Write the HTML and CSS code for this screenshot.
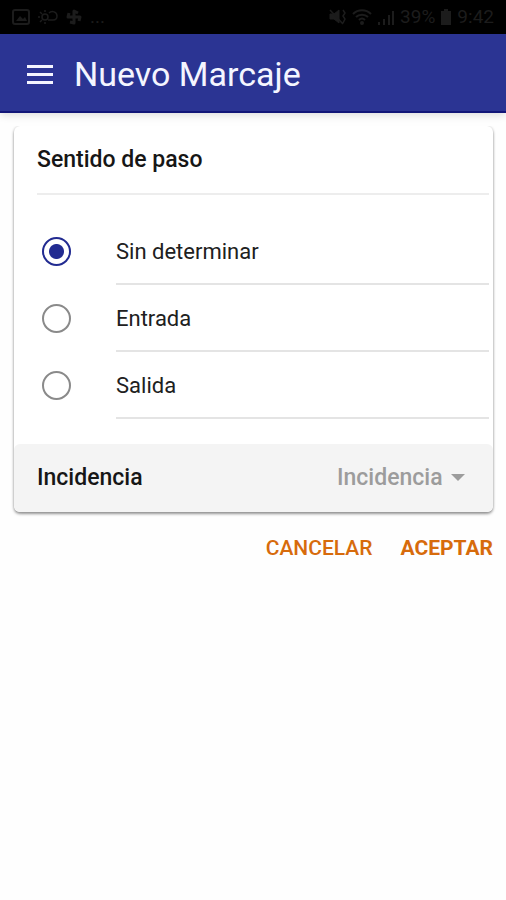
FILE: index.html
```html
<!DOCTYPE html>
<html lang="es">
<head>
<meta charset="utf-8">
<meta name="viewport" content="width=device-width, initial-scale=1">
<title>Nuevo Marcaje</title>
<link rel="stylesheet" href="styles.css">
</head>
<body>
<div class="status">
  <div class="status-group">
    <svg width="18" height="18" viewBox="0 0 18 18" fill="none" stroke="currentColor" stroke-width="2"><rect x="1" y="2" width="16" height="14" rx="2"/><path d="M4 13l4-5 3 3 2-2 2 4z" fill="currentColor" stroke="none"/></svg>
    <svg width="20" height="18" viewBox="0 0 20 18" fill="none" stroke="currentColor" stroke-width="1.5"><circle cx="7" cy="9" r="3"/><path d="M7 2v2M7 14v2M0 9h2M2 4l2 2M2 14l2-2M11 5c3-3 8-1 8 3 0 3-2 4-4 4h-5"/></svg>
    <svg width="16" height="18" viewBox="0 0 16 18" fill="none" stroke="currentColor" stroke-width="3" stroke-linejoin="round"><path d="M8 9V3l4 2M8 9h6l-1 4M8 9v6l-4-1M8 9H2l1-4"/></svg>
    <span class="more">...</span>
  </div>
  <div class="status-group status-right">
    <svg width="18" height="18" viewBox="0 0 18 18" fill="currentColor" stroke="currentColor"><path d="M1 6h4l5-4v13l-5-4H1z"/><path d="M1 2l13 14M14 2l2 3-2 3 2 3-2 4" fill="none" stroke-width="1.5"/></svg>
    <svg width="20" height="18" viewBox="0 0 20 18" fill="none" stroke="currentColor" stroke-width="2"><path d="M1 6c5-5 13-5 18 0M4 9c3-3 9-3 12 0M7 12c2-2 4-2 6 0"/><circle cx="10" cy="15" r="1"/></svg>
    <svg width="18" height="18" viewBox="0 0 18 18" fill="none" stroke="currentColor" stroke-width="2"><path d="M2 17v-3M7 17v-6M12 17V7M16 17V3"/></svg>
    <span>39%</span>
    <svg width="12" height="18" viewBox="0 0 12 18" fill="currentColor"><path d="M4 1h4v2h3v14H1V3h3z"/></svg>
    <span>9:42</span>
  </div>
</div>
<header class="bar">
  <button class="menu" type="button" aria-label="Menú">
    <svg width="26" height="20" viewBox="0 0 26 20" fill="currentColor"><path d="M0 1h26v3H0zM0 9h26v3H0zM0 17h26v3H0z"/></svg>
  </button>
  <h1>Nuevo Marcaje</h1>
</header>
<main>
  <form>
    <section class="card">
      <fieldset>
        <legend>Sentido de paso</legend>
        <label class="option"><input type="radio" name="paso" checked><span>Sin determinar</span></label>
        <label class="option"><input type="radio" name="paso"><span>Entrada</span></label>
        <label class="option"><input type="radio" name="paso"><span>Salida</span></label>
      </fieldset>
      <div class="incident">
        <label for="incidencia">Incidencia</label>
        <div class="picker">
          <select id="incidencia"><option>Incidencia</option></select>
          <svg width="14" height="8" viewBox="0 0 14 8" fill="currentColor"><path d="M0 0h14L7 7z"/></svg>
        </div>
      </div>
    </section>
    <div class="actions">
      <button type="button">CANCELAR</button>
      <button type="button" class="accept">ACEPTAR</button>
    </div>
  </form>
</main>
</body>
</html>
```
FILE: styles.css
```css
* {
  box-sizing: border-box;
}

body {
  margin: 0;
  background: #fefefe;
  color: #202020;
  font: 22px/28px Roboto, "Liberation Sans", sans-serif;
}

button,
select {
  padding: 0;
  border: 0;
  background: none;
  font: inherit;
  color: inherit;
}

.status {
  display: flex;
  justify-content: space-between;
  align-items: center;
  height: 34px;
  padding: 0 12px;
  background: #000;
  color: #1c1c1c;
  font-size: 19px;
}

.status-group {
  display: flex;
  align-items: center;
  gap: 8px;
}

.status-right {
  gap: 5px;
}

.bar {
  display: flex;
  align-items: center;
  gap: 21px;
  height: 79px;
  padding: 2px 27px 0;
  border-bottom: 2px solid #121678;
  background: #2b3493;
  box-shadow: 0 2px 8px rgba(0, 0, 0, 0.14);
  color: #f4f5ff;
}

.menu {
  display: flex;
}

h1 {
  margin: 0;
  font-size: 34px;
  line-height: 40px;
  font-weight: 400;
}

main {
  padding: 13px 13px 0 14px;
}

.card {
  border-radius: 6px;
  background: #fff;
  box-shadow: 0 2px 3px rgba(0, 0, 0, 0.4), 0 0 3px rgba(0, 0, 0, 0.14);
  clip-path: inset(0 -8px -8px -8px);
}

fieldset {
  min-width: 0;
  margin: 0;
  padding: 0 4px 25px 23px;
  border: 0;
}

legend {
  width: 100%;
  margin-bottom: 23px;
  padding: 20px 0 19px;
  border-bottom: 2px solid #ededed;
  color: #161616;
  font-size: 23px;
  font-weight: 500;
}

.option {
  display: flex;
  align-items: center;
  gap: 45px;
  padding-left: 5px;
}

.option span {
  flex: 1;
  padding: 20px 0 17px;
  border-bottom: 2px solid #e4e4e4;
}

.option input {
  appearance: none;
  flex: none;
  width: 29px;
  height: 29px;
  margin: 0;
  border: 2px solid #8a8a8a;
  border-radius: 50%;
}

.option input:checked {
  border-color: #222b91;
  background: radial-gradient(circle, #222b91 7px, transparent 8px);
}

.incident {
  display: flex;
  justify-content: space-between;
  align-items: center;
  height: 68px;
  padding: 0 28px 0 23px;
  border-radius: 6px;
  background: #f4f4f4;
  color: #161616;
  font-size: 23px;
  font-weight: 500;
}

.picker {
  display: flex;
  align-items: center;
  gap: 8px;
  color: #9c9c9c;
}

.picker select {
  appearance: none;
}

.actions {
  display: flex;
  justify-content: flex-end;
  gap: 28px;
  padding-top: 22px;
  color: #d76b0c;
  font-size: 21px;
  font-weight: 500;
}

.accept {
  font-weight: 700;
}
```
